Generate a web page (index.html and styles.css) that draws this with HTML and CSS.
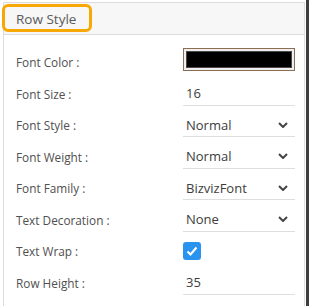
FILE: index.html
```html
<!DOCTYPE html>
<html lang="en">
  <head>
    <meta charset="UTF-8" />
    <title>Row Style</title>
    <link rel="stylesheet" href="styles.css">
  </head>
  <body>
    <div class="page">
      <div class="panel">
        <div class="panel-head">
          <span class="panel-title">Row Style</span>
          <span class="highlight"></span>
        </div>
        <div class="panel-body">
          <div class="row">
            <label class="row-label">Font Color :</label>
            <div class="row-value">
              <span class="color-swatch"><span class="color-fill"></span></span>
            </div>
          </div>
          <div class="row">
            <label class="row-label">Font Size :</label>
            <div class="row-value field">16</div>
          </div>
          <div class="row">
            <label class="row-label">Font Style :</label>
            <div class="row-value field">
              <span>Normal</span>
              <svg class="chevron" width="10" height="6" viewBox="0 0 10 6"><polyline points="1,1 5,5 9,1" /></svg>
            </div>
          </div>
          <div class="row">
            <label class="row-label">Font Weight :</label>
            <div class="row-value field">
              <span>Normal</span>
              <svg class="chevron" width="10" height="6" viewBox="0 0 10 6"><polyline points="1,1 5,5 9,1" /></svg>
            </div>
          </div>
          <div class="row">
            <label class="row-label">Font Family :</label>
            <div class="row-value field">
              <span>BizvizFont</span>
              <svg class="chevron" width="10" height="6" viewBox="0 0 10 6"><polyline points="1,1 5,5 9,1" /></svg>
            </div>
          </div>
          <div class="row">
            <label class="row-label">Text Decoration :</label>
            <div class="row-value field">
              <span>None</span>
              <svg class="chevron" width="10" height="6" viewBox="0 0 10 6"><polyline points="1,1 5,5 9,1" /></svg>
            </div>
          </div>
          <div class="row">
            <label class="row-label">Text Wrap :</label>
            <div class="row-value">
              <span class="checkbox">
                <svg width="18" height="18" viewBox="0 0 18 18"><polyline points="4.5,9.5 7.5,12.5 13.5,5.5" /></svg>
              </span>
            </div>
          </div>
          <div class="row">
            <label class="row-label">Row Height :</label>
            <div class="row-value field">35</div>
          </div>
        </div>
      </div>
      <div class="scrollbar"></div>
    </div>
  </body>
</html>
```

FILE: styles.css
```css
body {
  margin: 0;
  font-family: "Open Sans", sans-serif;
  background: #fff;
  color: #333;
}
.page {
  display: flex;
  height: 306px;
  padding-left: 3px;
  box-sizing: border-box;
}
.panel {
  flex: none;
  width: 302px;
  margin-top: 2px;
  border: 1px solid #dcdcdc;
  border-bottom: none;
  box-sizing: border-box;
}
.panel-head {
  position: relative;
  height: 32px;
  display: flex;
  align-items: center;
  padding-left: 12px;
  background: #f7f7f7;
  border-bottom: 1px solid #dcdcdc;
  box-sizing: border-box;
}
.panel-title {
  font-size: 13.5px;
  color: #5a5a5a;
}
.highlight {
  position: absolute;
  left: -2px;
  top: 1px;
  width: 90px;
  height: 28px;
  border: 3px solid #f8a804;
  border-radius: 6px;
  box-sizing: border-box;
}
.panel-body {
  padding: 7.5px 9px 0 12px;
}
.row {
  display: flex;
  align-items: center;
  height: 31.5px;
  padding-top: 8px;
  box-sizing: border-box;
}
.row-label {
  flex: 1;
  font-size: 11.8px;
  color: #505050;
}
.row-value {
  width: 112px;
  display: flex;
  align-items: center;
}
.field {
  align-self: stretch;
  justify-content: space-between;
  padding: 0 7px 0 3px;
  border-bottom: 1px solid #dedede;
  font-size: 13px;
  color: #3c3c3c;
  box-sizing: border-box;
}
.chevron polyline {
  fill: none;
  stroke: #444;
  stroke-width: 2;
}
.color-swatch {
  display: block;
  width: 112px;
  height: 23px;
  margin-bottom: 6px;
  padding: 2px;
  border: 1px solid #8c6d52;
  background: #efefef;
  box-sizing: border-box;
}
.color-fill {
  display: block;
  height: 100%;
  background: #000;
  border: 1px solid #4a4a4a;
  box-sizing: border-box;
}
.checkbox {
  display: block;
  width: 18px;
  height: 18px;
  border-radius: 3px;
  background: #2a93f0;
}
.checkbox svg {
  display: block;
}
.checkbox polyline {
  fill: none;
  stroke: #fff;
  stroke-width: 2.2;
}
.scrollbar {
  flex: 1;
  margin-left: 1px;
  background: #3d3d3d;
}
```
